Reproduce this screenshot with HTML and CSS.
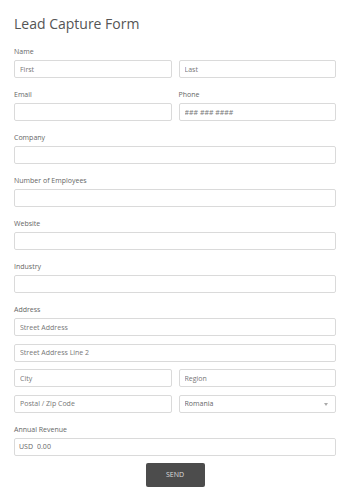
FILE: index.html
```html
<!DOCTYPE html>
<html lang="en">
  <head>
    <meta charset="UTF-8" />
    <meta name="viewport" content="width=device-width, initial-scale=1.0" />
    <title>Lead Capture Form</title>

    <!-- Styles -->
    <link rel="stylesheet" href="styles.css">
  </head>
  <body>
    <h1 class="form-title">Lead Capture Form</h1>

    <form class="lead-form" onsubmit="return false">
      <!-- Name -->
      <div class="form-group">
        <label>Name</label>
        <div class="row">
          <input type="text" placeholder="First" />
          <input type="text" placeholder="Last" />
        </div>
      </div>

      <!-- Email / Phone -->
      <div class="form-group">
        <div class="row">
          <div>
            <label for="email">Email</label>
            <input type="email" id="email" />
          </div>
          <div>
            <label for="phone">Phone</label>
            <input type="tel" id="phone" placeholder="### ### ####" />
          </div>
        </div>
      </div>

      <div class="form-group">
        <label for="company">Company</label>
        <input type="text" id="company" />
      </div>

      <div class="form-group">
        <label for="employees">Number of Employees</label>
        <input type="text" id="employees" />
      </div>

      <div class="form-group">
        <label for="website">Website</label>
        <input type="text" id="website" />
      </div>

      <div class="form-group">
        <label for="industry">Industry</label>
        <input type="text" id="industry" />
      </div>

      <!-- Address -->
      <div class="form-group address">
        <label>Address</label>
        <input type="text" placeholder="Street Address" />
        <input type="text" placeholder="Street Address Line 2" />
        <div class="row">
          <input type="text" placeholder="City" />
          <input type="text" placeholder="Region" />
        </div>
        <div class="row">
          <input type="text" placeholder="Postal / Zip Code" />
          <div class="select-wrap">
            <select>
              <option>Romania</option>
            </select>
          </div>
        </div>
      </div>

      <div class="form-group">
        <label for="revenue">Annual Revenue</label>
        <div class="currency">
          <span class="currency-code">USD</span>
          <input type="text" id="revenue" placeholder="0.00" />
        </div>
      </div>

      <div class="actions">
        <button type="submit">SEND</button>
      </div>
    </form>
  </body>
</html>
```

FILE: styles.css
```css
/* General Styles */
body {
  font-family: "Open Sans", sans-serif;
  margin: 0;
  padding: 14px;
  background: white;
  color: #666;
}

.form-title {
  margin: 0 0 13px;
  font-size: 14px;
  line-height: 20px;
  font-weight: 400;
  color: #555;
}

/* Form Styles */
.form-group {
  margin-bottom: 12px;
}

.form-group label {
  display: block;
  margin-bottom: 3px;
  font-size: 7px;
  line-height: 10px;
  color: #666;
}

.row {
  display: grid;
  grid-template-columns: 1fr 1fr;
  gap: 7px;
}

.lead-form input,
.lead-form select {
  display: block;
  width: 100%;
  height: 18px;
  box-sizing: border-box;
  padding: 0 5px;
  border: 1px solid #dadada;
  border-radius: 2px;
  background: white;
  font-family: "Open Sans", sans-serif;
  font-size: 7px;
  color: #666;
  outline: none;
}

.lead-form input::placeholder {
  color: #777;
}

.address {
  display: flex;
  flex-direction: column;
  gap: 7.5px;
}

.address label {
  margin-bottom: -4.5px;
}

/* Select */
.select-wrap {
  position: relative;
}

.lead-form select {
  appearance: none;
  -webkit-appearance: none;
}

.select-wrap::after {
  content: "";
  position: absolute;
  right: 8px;
  top: 8px;
  border-left: 2.5px solid transparent;
  border-right: 2.5px solid transparent;
  border-top: 3px solid #aaa;
}

/* Currency */
.currency {
  display: flex;
  align-items: center;
  height: 18px;
  box-sizing: border-box;
  padding-left: 4px;
  border: 1px solid #dadada;
  border-radius: 2px;
  font-size: 7px;
  color: #666;
}

.currency-code {
  margin-right: 1px;
}

.currency input {
  height: 16px;
  padding-left: 3px;
  border: none;
}

.currency input::placeholder {
  color: #666;
}

/* Button Styles */
.actions {
  display: flex;
  justify-content: center;
  margin-top: -5px;
}

button {
  width: 59px;
  height: 24px;
  padding: 0;
  background: #4c4c4c;
  color: #ddd;
  border: none;
  border-radius: 2px;
  font-family: "Open Sans", sans-serif;
  font-size: 7px;
  cursor: pointer;
}

button:hover {
  background: #3f3f3f;
}
```
